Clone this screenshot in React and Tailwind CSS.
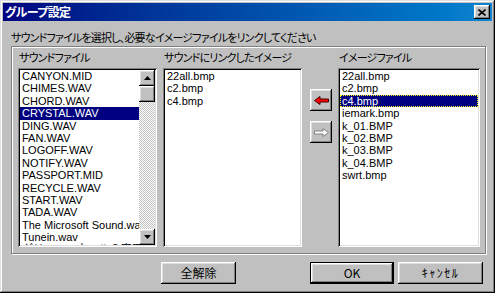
import React from "react";

const jp = "font-['Noto_Sans_CJK_JP',sans-serif] [font-feature-settings:'palt'] whitespace-nowrap";
const lat = "font-['Liberation_Sans','Noto_Sans_CJK_JP',sans-serif]";
const raised = "shadow-[inset_-1px_-1px_#000,inset_1px_1px_#fff,inset_-2px_-2px_#808080,inset_2px_2px_#dfdfdf]";
const sunken = "shadow-[inset_1px_1px_#808080,inset_-1px_-1px_#fff,inset_2px_2px_#000,inset_-2px_-2px_#dfdfdf]";

const sounds = [
  "CANYON.MID", "CHIMES.WAV", "CHORD.WAV", "CRYSTAL.WAV", "DING.WAV", "FAN.WAV",
  "LOGOFF.WAV", "NOTIFY.WAV", "PASSPORT.MID", "RECYCLE.WAV", "START.WAV", "TADA.WAV",
  "The Microsoft Sound.wav", "Tunein.wav", "グリーン・ウェルの魔王の叫び.wav"
];
const linked = ["22all.bmp", "c2.bmp", "c4.bmp"];
const images = ["22all.bmp", "c2.bmp", "c4.bmp", "iemark.bmp", "k_01.BMP", "k_02.BMP", "k_03.BMP", "k_04.BMP", "swrt.bmp"];

function Row({ text, selected, focus }) {
  return (
    <div
      className={
        "h-[12.4px] leading-[12px] px-[2px] whitespace-nowrap overflow-hidden " +
        (selected ? "bg-[#000080] text-white " : "text-black ") +
        (focus ? "outline-1 outline-dotted outline-[#ffff00] -outline-offset-1" : "")
      }
    >
      {text}
    </div>
  );
}

function ScrollBtn({ down }) {
  return (
    <div className={"w-[16px] h-[16px] bg-[#c0c0c0] flex items-center justify-center " + raised}>
      <svg width="7" height="4" viewBox="0 0 7 4">
        {down ? <polygon points="0,0 7,0 3.5,4" fill="#000" /> : <polygon points="0,4 3.5,0 7,4" fill="#000" />}
      </svg>
    </div>
  );
}

export default function App() {
  return (
    <div className="w-[495px] h-[293px] bg-[#c0c0c0] p-[3px] flex flex-col shadow-[inset_-1px_-1px_#000,inset_1px_1px_#dfdfdf,inset_-2px_-2px_#808080,inset_2px_2px_#fff]">
      {/* title bar */}
      <div className="h-[18px] bg-linear-to-r from-[#000080] to-[#1084d0] flex items-center justify-between pl-[2px] pr-[2px]">
        <span className={"text-white font-bold text-[12px] leading-[18px] tracking-[-0.6px] " + jp}>グループ設定</span>
        <div className={"w-[16px] h-[14px] bg-[#c0c0c0] flex items-center justify-center " + raised}>
          <svg width="8" height="7" viewBox="0 0 8 7">
            <path d="M0.5 0.5 L7.5 6.5 M7.5 0.5 L0.5 6.5" stroke="#000" strokeWidth="1.6" />
          </svg>
        </div>
      </div>

      <div className="pl-[8px] flex flex-col">
        <div className={"mt-[10px] h-[12px] leading-[12px] text-[11px] tracking-[-0.8px] text-black " + jp}>
          サウンドファイルを選択し、必要なイメージファイルをリンクしてください
        </div>

        {/* group box */}
        <div className="mt-[3px] w-[475px] h-[208px] border border-[#808080] shadow-[inset_1px_1px_#fff,1px_1px_#fff] flex pl-[6px] pr-[5px] pt-[4px]">
          <div className="w-[139px] flex flex-col">
            <div className={"h-[12px] leading-[12px] text-[11px] tracking-[-0.8px] pl-[1px] mb-[5px] " + jp}>サウンドファイル</div>
            <div className={"h-[179px] bg-white p-[2px] flex " + sunken}>
              <div className={"flex-1 overflow-hidden text-[11px] " + lat}>
                {sounds.map((s, i) => (
                  <Row key={i} text={s} selected={i === 3} />
                ))}
              </div>
              <div className="w-[16px] flex flex-col">
                <ScrollBtn />
                <div className={"w-[16px] h-[16px] bg-[#c0c0c0] " + raised} />
                <div className="flex-1 bg-[image:repeating-conic-gradient(#c0c0c0_0%_25%,#fff_0%_50%)] bg-[length:2px_2px]" />
                <ScrollBtn down />
              </div>
            </div>
          </div>

          <div className="w-[139px] ml-[6px] flex flex-col">
            <div className={"h-[12px] leading-[12px] text-[11px] tracking-[-0.8px] pl-[1px] mb-[5px] " + jp}>サウンドにリンクしたイメージ</div>
            <div className={"h-[179px] bg-white p-[2px] overflow-hidden text-[11px] " + lat + " " + sunken}>
              {linked.map((s, i) => (
                <Row key={i} text={s} />
              ))}
            </div>
          </div>

          <div className="w-[36px] flex flex-col items-start pl-[8px] pt-[38px] gap-[10px]">
            <div className={"w-[22px] h-[22px] bg-[#c0c0c0] flex items-center justify-center " + raised}>
              <svg width="15" height="9" viewBox="0 0 15 9">
                <polygon points="0.5,4.5 6,0.5 6,3 14.5,3 14.5,6 6,6 6,8.5" fill="#ff0000" stroke="#400000" strokeWidth="1" />
              </svg>
            </div>
            <div className={"w-[22px] h-[22px] bg-[#c0c0c0] flex items-center justify-center " + raised}>
              <svg width="15" height="9" viewBox="0 0 15 9">
                <polygon points="14.5,4.5 9,0.5 9,3 0.5,3 0.5,6 9,6 9,8.5" fill="#fff" stroke="#808080" strokeWidth="1" />
              </svg>
            </div>
          </div>

          <div className="w-[142px] flex flex-col">
            <div className={"h-[12px] leading-[12px] text-[11px] tracking-[-0.8px] pl-[1px] mb-[5px] " + jp}>イメージファイル</div>
            <div className={"h-[179px] bg-white p-[2px] overflow-hidden text-[11px] " + lat + " " + sunken}>
              {images.map((s, i) => (
                <Row key={i} text={s} selected={i === 2} focus={i === 2} />
              ))}
            </div>
          </div>
        </div>

        {/* buttons */}
        <div className="mt-[8px] flex items-center pl-[150px] pr-[9px]">
          <div className={"w-[75px] h-[22px] flex items-center justify-center text-[12px] " + jp + " " + raised}>全解除</div>
          <div className="flex-1" />
          <div className="w-[84px] h-[22px] border border-black">
            <div className={"w-full h-full flex items-center justify-center text-[12px] " + jp + " " + raised}>OK</div>
          </div>
          <div className={"ml-[4px] w-[85px] h-[22px] flex items-center justify-center text-[12px] tracking-[1.5px] " + jp + " " + raised}>ｷｬﾝｾﾙ</div>
        </div>
      </div>
    </div>
  );
}
